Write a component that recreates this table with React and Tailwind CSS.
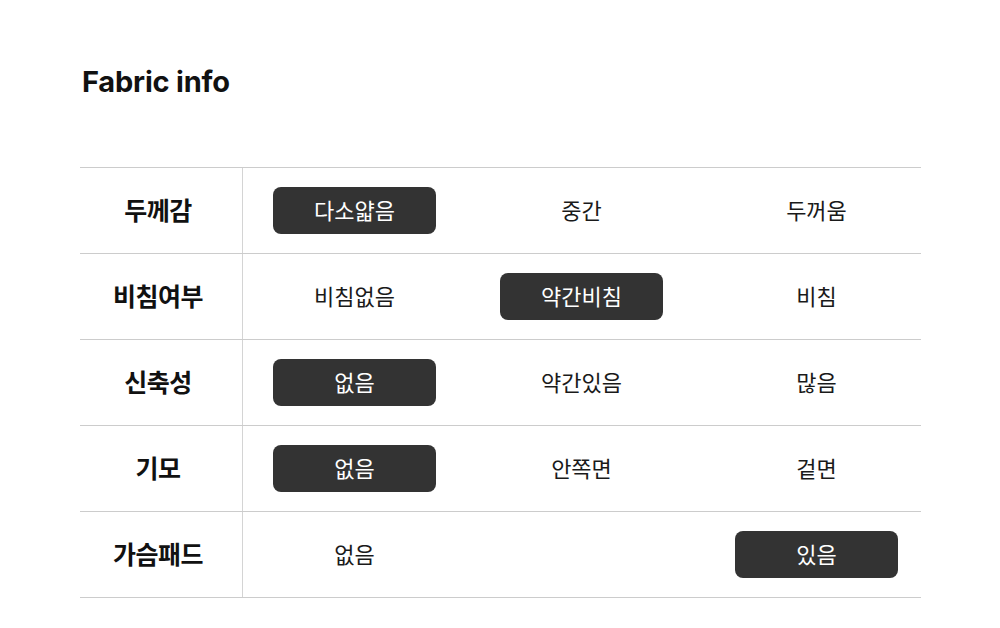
import React from "react";

const rows = [
  { label: "두께감", values: ["다소얇음", "중간", "두꺼움"], sel: 0 },
  { label: "비침여부", values: ["비침없음", "약간비침", "비침"], sel: 1 },
  { label: "신축성", values: ["없음", "약간있음", "많음"], sel: 0 },
  { label: "기모", values: ["없음", "안쪽면", "겉면"], sel: 0 },
  { label: "가슴패드", values: ["없음", "", "있음"], sel: 2 },
];

const gaps = ["mr-[64px]", "mr-[72px]", ""];

const ko = { fontFamily: '"Noto Sans CJK KR", "Noto Sans", sans-serif' };

export default function App() {
  return (
    <div className="w-[1000px] h-[628px] bg-white overflow-hidden">
      <div className="pl-[82px] pt-[64px]">
        <h1
          className="text-[29px] leading-[35px] font-bold text-[#111111] tracking-[-0.2px]"
          style={{ fontFamily: "Inter, sans-serif" }}
        >
          Fabric info
        </h1>
      </div>
      <div className="ml-[80px] mt-[68px] w-[841px] border-t border-[#cccccc]" style={ko}>
        {rows.map((r) => (
          <div key={r.label} className="flex h-[86px] border-b border-[#cccccc]">
            <div className="w-[163px] flex items-center justify-center border-r border-[#d4d4d4] text-[25px] font-bold text-[#111111] tracking-[-0.5px] pb-[2px] pr-[6px]">
              {r.label}
            </div>
            <div className="flex-1 flex items-center pl-[30px]">
              {r.values.map((v, i) => (
                <div
                  key={i}
                  className={
                    (i === r.sel
                      ? "w-[163px] h-[47px] rounded-[8px] bg-[#333333] text-white flex items-center justify-center text-[22px] pb-[2px] "
                      : "w-[163px] h-[47px] flex items-center justify-center text-[22px] text-[#1a1a1a] pb-[2px] ") + gaps[i]
                  }
                >
                  {v}
                </div>
              ))}
            </div>
          </div>
        ))}
      </div>
    </div>
  );
}
